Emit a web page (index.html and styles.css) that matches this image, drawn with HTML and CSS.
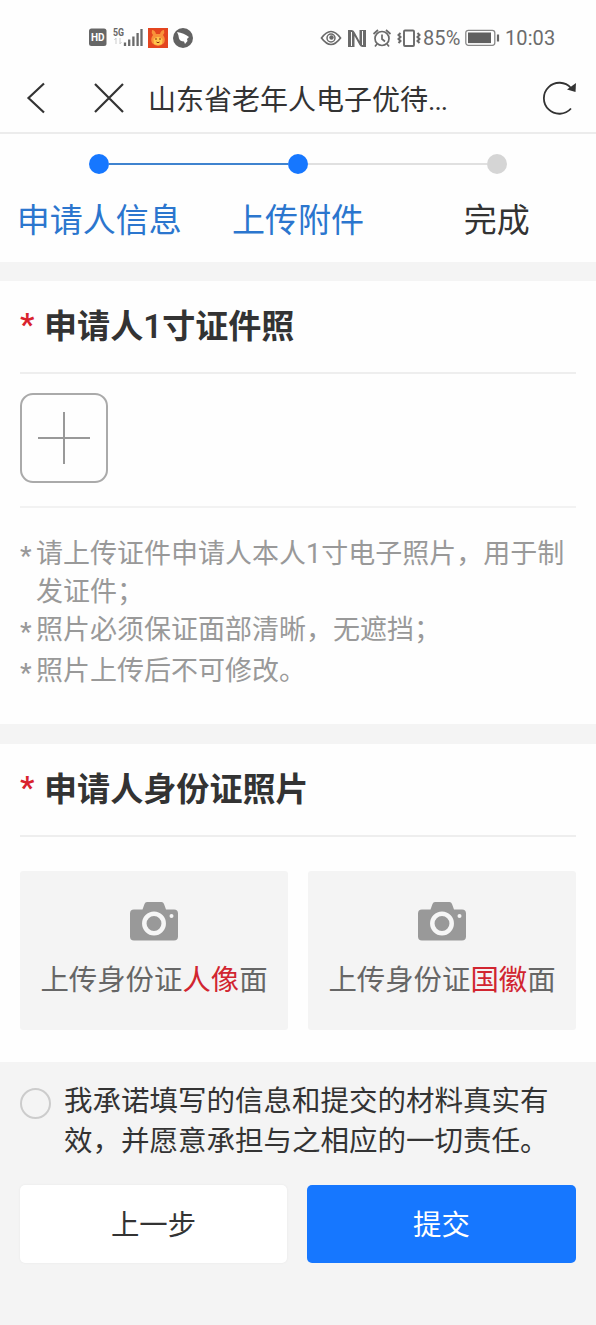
FILE: index.html
```html
<!DOCTYPE html>
<html lang="zh-CN">
<head>
<meta charset="utf-8">
<title>山东省老年人电子优待证</title>
<link rel="stylesheet" href="styles.css">
</head>
<body>
<div class="status">
  <svg class="status-left" width="106" height="24" viewBox="0 0 106 24">
    <rect x="1" y="4.500" width="17.500" height="17.500" rx="2.500" fill="#666"/>
    <text x="9.700" y="17" class="hd">HD</text>
    <text x="25" y="12" class="fiveg" textLength="11" lengthAdjust="spacingAndGlyphs">5G</text>
    <path d="M28 14v6M26.500 16l1.500-2M32 14v6M33.500 18l-1.500 2" stroke="#ccc" fill="none"/>
    <path d="M37 18.500v3.500M41.200 15.500v6.500M45.400 12.500v9.500M49.600 9v13M53.500 5v17" stroke="#6a6a6a" stroke-width="2.300"/>
    <rect x="60" y="4" width="20" height="20" fill="#e4451f"/>
    <path d="M64 6q3 0 4 4h4q1-4 4-4 1 3-1 5 3 4 1 8-3 3-6 3t-6-3q-2-4 1-8-2-2-1-5z" fill="#f8923a"/>
    <path d="M65.500 15q4.500-4 9 0l-.5 5q-4 2-8 0z" fill="#ffc64b"/>
    <path d="M67 15h2M71 15h2M68.500 18q1.500 1.500 3 0" stroke="#8c2c10" fill="none"/>
    <circle cx="95" cy="14" r="10" fill="#626262"/>
    <path d="M89 8q7 1 12 5l-2 2 .5 2-2.500 3-1-2.500q-4 0-5-3 0-3-2-6.500z" fill="#fff"/>
  </svg>
  <div class="status-right">
    <svg width="103" height="24" viewBox="0 0 103 24" fill="none" stroke="#6a6a6a" stroke-width="1.700">
      <path d="M1.500 12q9.500-13 19 0q-9.500 13-19 0z"/>
      <circle cx="11" cy="12" r="4" stroke-width="1.500"/><circle cx="11.500" cy="11.500" r="2.200" fill="#6a6a6a" stroke="none"/>
      <path d="M28 4h3.500q2 0 3 2l5 9V4H46v17h-3.500q-2 0-3-2l-5-9v11H28z" fill="#6a6a6a" stroke="none"/>
      <path d="M31.500 6v14M42.500 5v14" stroke="#fefefe" stroke-width="1"/>
      <circle cx="62" cy="12.500" r="7"/><path d="M62 8.500v4.500l3 2.500M53.500 8l4.500-4M70.500 8l-4.500-4M57 18l-2 2.500M67 18l2 2.500"/>
      <rect x="84" y="4.500" width="10" height="15.500" rx="1" stroke-width="1.900"/><path d="M80.500 7l-2 2 2 2-2 2 2 2-2 2M97.500 7l2 2-2 2 2 2-2 2 2 2" stroke-width="2"/>
    </svg>
    <span class="percent">85%</span>
    <svg width="35" height="18" viewBox="0 0 35 18"><rect x=".8" y="1.300" width="29" height="15" rx="2.500" fill="#fff" stroke="#888" stroke-width="1.300"/><rect x="3" y="3.500" width="23" height="10.600" fill="#606060"/><path d="M33 5.500v7" stroke="#666" stroke-width="2.200"/></svg>
    <span class="clock">10:03</span>
  </div>
</div>
<header class="nav">
  <svg class="back" width="20" height="34" viewBox="0 0 20 34"><path d="M18 2.500L2.500 17L18 31.500"/></svg>
  <svg class="close" width="32" height="32" viewBox="0 0 32 32"><path d="M2 2l28 28M30 2L2 30"/></svg>
  <h1>山东省老年人电子优待<span>...</span></h1>
  <svg class="reload" width="36" height="36" viewBox="0 0 36 36"><path d="M29 28.500A15.500 15.500 0 1 1 29 8"/><path class="tip" d="M34 3l-.5 9-8.500-2.500z"/></svg>
</header>
<section class="steps">
  <div class="step done"><i class="dot"></i><span>申请人信息</span></div>
  <div class="step done"><i class="dot"></i><span>上传附件</span></div>
  <div class="step"><i class="dot"></i><span>完成</span></div>
</section>
<section class="panel photo">
  <h2><b>*</b>申请人1寸证件照</h2>
  <div class="picker">
    <div class="add"><svg width="52" height="52" viewBox="0 0 52 52"><path d="M26 0v52M0 26h52"/></svg></div>
  </div>
  <ul class="tips">
    <li>请上传证件申请人本人1寸电子照片，用于制发证件；</li>
    <li>照片必须保证面部清晰，无遮挡；</li>
    <li>照片上传后不可修改。</li>
  </ul>
</section>
<section class="panel idcard">
  <h2><b>*</b>申请人身份证照片</h2>
  <div class="cards">
    <div class="card">
      <svg width="48" height="39" viewBox="0 0 48 39"><path class="body" d="M4 7.500h8.500L14.500 2q.7-2 2.500-2h14.500q1.800 0 2.500 2l2 5.500H44q4 0 4 4V34.500q0 4-4 4H4q-4 0-4-4V11.500q0-4 4-4z"/><circle class="ring" cx="24" cy="21.500" r="9.700"/><circle class="led" cx="41.500" cy="14" r="2"/></svg>
      <p>上传身份证<em>人像</em>面</p>
    </div>
    <div class="card">
      <svg width="48" height="39" viewBox="0 0 48 39"><path class="body" d="M4 7.500h8.500L14.500 2q.7-2 2.500-2h14.500q1.800 0 2.500 2l2 5.500H44q4 0 4 4V34.500q0 4-4 4H4q-4 0-4-4V11.500q0-4 4-4z"/><circle class="ring" cx="24" cy="21.500" r="9.700"/><circle class="led" cx="41.500" cy="14" r="2"/></svg>
      <p>上传身份证<em>国徽</em>面</p>
    </div>
  </div>
</section>
<footer>
  <label class="agree"><i class="radio"></i><span>我承诺填写的信息和提交的材料真实有效，并愿意承担与之相应的一切责任。</span></label>
  <div class="actions">
    <button class="prev">上一步</button>
    <button class="submit">提交</button>
  </div>
</footer>
</body>
</html>
```

FILE: styles.css
```css
* { box-sizing: border-box; margin: 0; padding: 0; }
body {
  width: 596px;
  min-height: 1325px;
  background: #f4f4f4;
  color: #333;
  font-family: Roboto, "Noto Sans CJK SC", sans-serif;
}
svg { display: block; flex: none; }
i, em { font-style: normal; }

.status {
  height: 64px;
  padding: 24px 41px 0 88px;
  display: flex;
  justify-content: space-between;
  align-items: flex-start;
  background: #fefefe;
  color: #6c6c6c;
}
.hd { font: 700 10px Roboto, sans-serif; fill: #fff; text-anchor: middle; }
.fiveg { font: 700 11px Roboto, sans-serif; fill: #666; }
.status-right { display: flex; align-items: center; height: 28px; font-size: 20px; letter-spacing: .1px; }
.percent { width: 42px; }
.clock { width: 50px; margin-left: 5px; }

.nav {
  height: 70px;
  padding: 0 18px 0 26px;
  display: flex;
  align-items: center;
  background: #fefefe;
  border-bottom: 2px solid #ececec;
}
.nav svg { fill: none; stroke: #333; stroke-width: 2.2; }
.close { margin-left: 47px; }
.nav h1 { flex: 1; margin-left: 23px; padding-top: 5px; font-size: 28px; font-weight: 400; line-height: 40px; white-space: nowrap; }
.nav h1 span { letter-spacing: -1px; }
.nav .reload { stroke-width: 1.8; }
.nav .tip { fill: #333; stroke: none; }

.steps {
  height: 128px;
  padding-top: 20px;
  display: grid;
  grid-template-columns: repeat(3, 1fr);
  background: #fefefe;
}
.step { display: grid; justify-items: center; align-content: start; grid-template-columns: 1fr 20px 1fr; }
.step::before, .step::after { content: ""; height: 2px; width: 100%; align-self: center; background: #e0e0e0; grid-row: 1; }
.step .dot { width: 20px; height: 20px; border-radius: 50%; background: #d5d5d5; grid-area: 1 / 2; }
.step::before { grid-column: 1; }
.step::after { grid-column: 3; }
.step:first-child::before, .step:last-child::after { background: none; }
.step.done .dot { background: #1677ff; }
.step.done:first-child::after, .step.done + .done::before { background: #3f83cf; }
.step span { grid-area: 2 / 1 / 3 / 4; margin-top: 23px; font-size: 33px; line-height: 48px; }
.step.done span { color: #2b76ce; }

.panel { background: #fefefe; padding: 0 20px; }
.panel h2 {
  height: 93px;
  padding-bottom: 5px;
  display: flex;
  align-items: center;
  border-bottom: 2px solid #eee;
  font-size: 33.1px;
  font-weight: 600;
}
.panel h2 b { width: 24px; color: #d9232e; font-size: 32px; font-weight: 600; }
.photo { margin-top: 19px; height: 443px; }
.picker { height: 134px; padding-top: 19px; border-bottom: 2px solid #f2f2f2; }
.add { width: 88px; height: 90px; border: 2px solid #aaa; border-radius: 13px; display: grid; place-items: center; }
.add path { stroke: #999; stroke-width: 2; }
.tips { padding-top: 27px; list-style: none; color: #999; font-size: 27px; line-height: 38px; }
.tips li { position: relative; padding-left: 16px; margin-right: -10px; }
.tips li + li + li { margin-top: 3px; }
.tips li::before { content: "*"; position: absolute; left: 0; top: 2px; font-size: 26px; font-weight: 500; }

.idcard { margin-top: 20px; height: 318px; }
.cards { padding-top: 34px; display: grid; grid-template-columns: 1fr 1fr; gap: 20px; }
.card { height: 159px; padding-top: 31px; display: flex; flex-direction: column; align-items: center; background: #f4f4f4; border-radius: 3px; }
.card p { margin-top: 20px; font-size: 28.4px; line-height: 40px; color: #666; white-space: nowrap; }
.card em { color: #d12530; }
.body { fill: #999; }
.ring { fill: none; stroke: #f6f6f6; stroke-width: 4.5; }
.led { fill: #f6f6f6; }

footer { padding: 20px 20px 0; }
.agree { display: flex; font-size: 28.5px; line-height: 40px; }
.radio { flex: none; width: 31px; height: 31px; margin: 6px 13px 0 0; border: 2px solid #ccc; border-radius: 50%; }
.actions { margin-top: 23px; display: grid; grid-template-columns: 267px 269px; justify-content: space-between; }
.actions button { height: 78px; padding-bottom: 4px; border: 0; border-radius: 5px; font: 28.4px Roboto, "Noto Sans CJK SC", sans-serif; }
.prev { background: #fff; color: #333; box-shadow: 0 0 2px #e4e4e4; }
.submit { background: #1677ff; color: #fff; }
```
